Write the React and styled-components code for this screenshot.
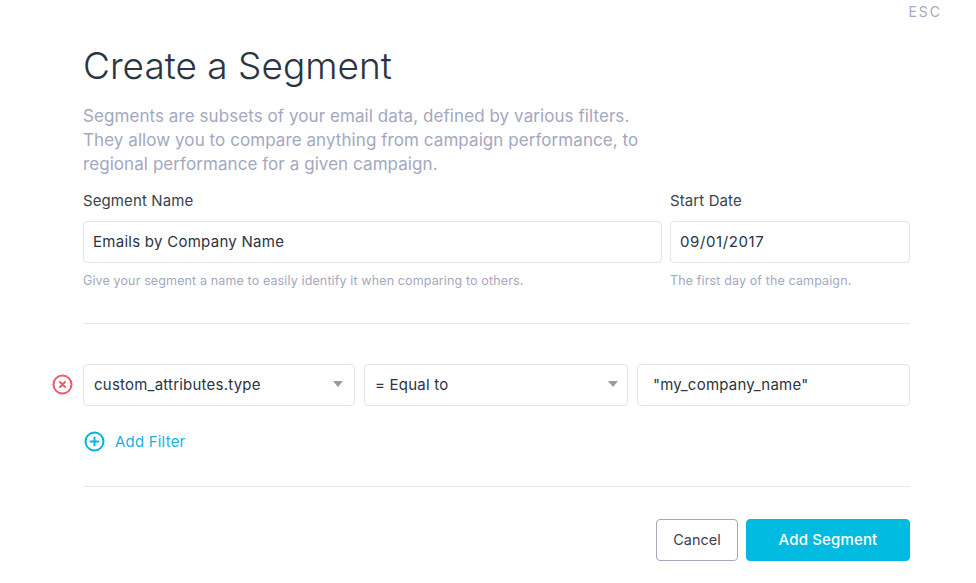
import React from "react";
import styled, { createGlobalStyle } from "styled-components";

const Global = createGlobalStyle`
  html, body { margin: 0; padding: 0; background: #fff; }
  body { font-family: "Inter", "Liberation Sans", sans-serif; color: #2b3440; }
  * { box-sizing: border-box; }
`;

const Page = styled.div`
  position: relative;
  width: 976px;
  height: 583px;
  overflow: hidden;
  padding: 45px 66px 0 83px;
`;

const Esc = styled.div`
  position: absolute;
  top: 4px;
  right: 34px;
  font-size: 14px;
  line-height: 16px;
  letter-spacing: 2px;
  color: #a6abbd;
`;

const Title = styled.h1`
  margin: 0;
  font-size: 37px;
  line-height: 42px;
  font-weight: 300;
  color: #2b3440;
`;

const Intro = styled.p`
  margin: 17px 0 0;
  width: 600px;
  font-size: 17px;
  line-height: 24px;
  font-weight: 400;
  letter-spacing: 0.07px;
  color: #a3a8bf;
`;

const Fields = styled.div`
  display: grid;
  grid-template-columns: 579px 240px;
  gap: 8px;
  margin-top: 16px;
`;

const Field = styled.div`
  display: flex;
  flex-direction: column;
`;

const Label = styled.label`
  font-size: 15px;
  line-height: 18px;
  letter-spacing: 0.1px;
  color: #3a4250;
  margin-bottom: 11px;
`;

const Box = styled.div`
  display: flex;
  align-items: center;
  height: 42px;
  padding: 0 ${(p) => p.$pad || 9}px 2px;
  background: #fff;
  border: 1px solid #e4e6ee;
  border-radius: 4px;
  font-size: 15px;
  letter-spacing: ${(p) => p.$track ?? 0.22}px;
  color: #2b3440;
`;

const SelectBox = styled(Box)`
  justify-content: space-between;
  padding-right: ${(p) => p.$caretPad}px;
`;

const Caret = styled.span`
  width: 0;
  height: 0;
  border-left: 5px solid transparent;
  border-right: 5px solid transparent;
  border-top: 6px solid #9a9a9e;
`;

const Hint = styled.div`
  margin-top: 11px;
  font-size: 12.5px;
  line-height: 14px;
  letter-spacing: 0.13px;
  color: #a3a8bf;
`;

const Rule = styled.hr`
  margin: ${(p) => p.$top}px 0 0;
  border: 0;
  border-top: 1px solid #e8e9ef;
`;

const FilterRow = styled.div`
  position: relative;
  display: grid;
  grid-template-columns: 272px 264px 273px;
  gap: 9px;
  margin-top: 40px;
`;

const Remove = styled.span`
  position: absolute;
  left: -31px;
  top: 10px;
  width: 21px;
  height: 21px;
  display: block;
`;

const AddFilter = styled.div`
  display: flex;
  align-items: center;
  gap: 10px;
  margin: 24px 0 0 1px;
  height: 22px;
  font-size: 15px;
  letter-spacing: 0.2px;
  color: #19b1e6;
`;

const Actions = styled.div`
  display: flex;
  justify-content: flex-end;
  gap: 8px;
  margin-top: 32px;
`;

const Button = styled.button`
  height: 42px;
  width: ${(p) => p.$w}px;
  padding: 0 0 2px;
  border-radius: 4px;
  font-family: inherit;
  font-size: ${(p) => (p.$primary ? 15 : 14.5)}px;
  letter-spacing: ${(p) => (p.$primary ? 0.15 : 0)}px;
  font-weight: ${(p) => (p.$primary ? 500 : 400)};
  color: ${(p) => (p.$primary ? "#fff" : "#3a4250")};
  background: ${(p) => (p.$primary ? "#00bbdf" : "#fff")};
  border: 1px solid ${(p) => (p.$primary ? "#00bbdf" : "#a3a8bf")};
`;

export default function App() {
  return (
    <Page>
      <Global />
      <Esc>ESC</Esc>
      <Title>Create a Segment</Title>
      <Intro>
        Segments are subsets of your email data, defined by various filters.
        <br />
        They allow you to compare anything from campaign performance, to
        <br />
        regional performance for a given campaign.
      </Intro>
      <Fields>
        <Field>
          <Label>Segment Name</Label>
          <Box $track={0.27}>Emails by Company Name</Box>
          <Hint>Give your segment a name to easily identify it when comparing to others.</Hint>
        </Field>
        <Field>
          <Label>Start Date</Label>
          <Box $track={0.6}>09/01/2017</Box>
          <Hint>The first day of the campaign.</Hint>
        </Field>
      </Fields>
      <Rule $top={35} />
      <FilterRow>
        <Remove>
          <svg width="21" height="21" viewBox="0 0 21 21" fill="none">
            <circle cx="10.5" cy="10.5" r="9" stroke="#f4566e" strokeWidth="2" />
            <path d="M8 8l5 5M13 8l-5 5" stroke="#f4566e" strokeWidth="2" strokeLinecap="round" />
          </svg>
        </Remove>
        <SelectBox $pad={10} $caretPad={11}>
          custom_attributes.type
          <Caret />
        </SelectBox>
        <SelectBox $pad={10} $caretPad={9}>
          = Equal to
          <Caret />
        </SelectBox>
        <Box $pad={15}>"my_company_name"</Box>
      </FilterRow>
      <AddFilter>
        <svg width="21" height="21" viewBox="0 0 21 21" fill="none">
          <circle cx="10.5" cy="10.5" r="9" stroke="#00b4de" strokeWidth="2" />
          <path d="M10.5 6.5v8M6.5 10.5h8" stroke="#00b4de" strokeWidth="2" strokeLinecap="round" />
        </svg>
        Add Filter
      </AddFilter>
      <Rule $top={34} />
      <Actions>
        <Button $w={82}>Cancel</Button>
        <Button $w={164} $primary>Add Segment</Button>
      </Actions>
    </Page>
  );
}
